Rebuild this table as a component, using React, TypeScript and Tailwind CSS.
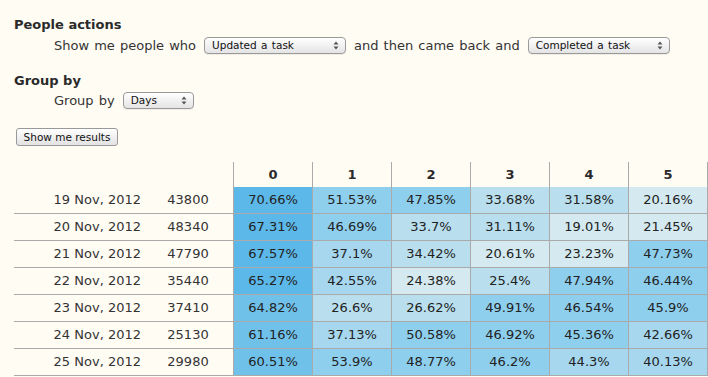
const rows = [
    { date: '19 Nov, 2012', count: '43800', values: [70.66, 51.53, 47.85, 33.68, 31.58, 20.16] },
    { date: '20 Nov, 2012', count: '48340', values: [67.31, 46.69, 33.7, 31.11, 19.01, 21.45] },
    { date: '21 Nov, 2012', count: '47790', values: [67.57, 37.1, 34.42, 20.61, 23.23, 47.73] },
    { date: '22 Nov, 2012', count: '35440', values: [65.27, 42.55, 24.38, 25.4, 47.94, 46.44] },
    { date: '23 Nov, 2012', count: '37410', values: [64.82, 26.6, 26.62, 49.91, 46.54, 45.9] },
    { date: '24 Nov, 2012', count: '25130', values: [61.16, 37.13, 50.58, 46.92, 45.36, 42.66] },
    { date: '25 Nov, 2012', count: '29980', values: [60.51, 53.9, 48.77, 46.2, 44.3, 40.13] },
];

// heat buckets of 10%, starting at 15
const heat = (v: number) => {
    if (v >= 65) return 'bg-[#5cb8e8]';
    if (v >= 55) return 'bg-[#70c1ea]';
    if (v >= 45) return 'bg-[#8ecfee]';
    if (v >= 35) return 'bg-[#a6d7ef]';
    if (v >= 25) return 'bg-[#b9dfee]';
    return 'bg-[#d4e9f0]';
};

const Arrows = () => (
    <svg width="6" height="9" viewBox="0 0 6 9" className="shrink-0">
        <path d="M3 0.5 L5.5 3.5 L0.5 3.5 Z" fill="#555" />
        <path d="M3 8.5 L5.5 5.5 L0.5 5.5 Z" fill="#555" />
    </svg>
);

const Select = ({ label, width }: { label: string; width: string }) => (
    <div
        className={`${width} h-[17px] flex items-center justify-between pl-[7px] pr-[6px] border border-[#9a9a9a] rounded-[4px] bg-gradient-to-b from-white to-[#e4e4e4] text-[10.5px] text-[#111] leading-none shadow-[0_1px_0_rgba(0,0,0,0.06)]`}
    >
        <span>{label}</span>
        <Arrows />
    </div>
);

const App = () => {
    return (
        <div className="w-[708px] h-[377px] overflow-hidden bg-[#fffcf4] text-[#333] font-['DejaVu_Sans',sans-serif]">
            <div className="pl-[14px]">
                <h2 className="mt-[17px] h-[16px] leading-[16px] text-[13px] font-bold text-[#2a2a2a]">
                    People actions
                </h2>
                <div className="mt-[4px] h-[17px] pl-[40px] flex items-center gap-[8px] text-[13px] [word-spacing:1px]">
                    <span>Show me people who</span>
                    <Select label="Updated a task" width="w-[142px]" />
                    <span>and then came back and</span>
                    <Select label="Completed a task" width="w-[142px]" />
                </div>

                <h2 className="mt-[19px] h-[16px] leading-[16px] text-[13px] font-bold text-[#2a2a2a]">
                    Group by
                </h2>
                <div className="mt-[3px] h-[17px] pl-[40px] flex items-center gap-[8px] text-[13px] [word-spacing:1px]">
                    <span>Group by</span>
                    <Select label="Days" width="w-[71px]" />
                </div>

                <button className="mt-[19px] ml-[2px] w-[102px] h-[18px] flex items-center justify-center border border-[#999] rounded-[3px] bg-gradient-to-b from-white to-[#e2e2e2] text-[10.5px] text-[#111] leading-none">
                    Show me results
                </button>

                <div className="mt-[16px] grid grid-cols-[129px_90px_79px_79px_79px_79px_79px_80px] text-[13px]">
                    <div className="h-[25px]" />
                    <div className="h-[25px]" />
                    {[0, 1, 2, 3, 4, 5].map((n) => (
                        <div
                            key={n}
                            className={`h-[25px] flex items-center justify-center font-bold text-[#2a2a2a] border-l border-[#aaa] ${n === 5 ? 'border-r' : ''}`}
                        >
                            {n}
                        </div>
                    ))}

                    {rows.map((row) => (
                        <div key={row.date} className="contents">
                            <div className="h-[27px] flex items-center justify-end pr-[2px] border-b border-[#aaa]">
                                {row.date}
                            </div>
                            <div className="h-[27px] flex items-center justify-center border-b border-[#aaa]">
                                {row.count}
                            </div>
                            {row.values.map((v, i) => (
                                <div
                                    key={i}
                                    className={`h-[27px] flex items-center justify-center text-[#222] border-b border-l border-[#aaa] ${heat(v)} ${i === 5 ? 'border-r' : ''}`}
                                >
                                    {v}%
                                </div>
                            ))}
                        </div>
                    ))}
                </div>
            </div>
        </div>
    );
};

export default App;
